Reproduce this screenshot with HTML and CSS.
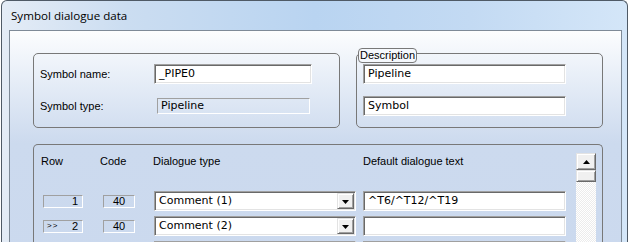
FILE: index.html
```html
<!DOCTYPE html>
<html>
<head>
<meta charset="utf-8">
<link rel="stylesheet" href="styles.css">
</head>
<body>
<div class="window">
  <div class="titlebar"><span class="title">Symbol dialogue data</span></div>
  <div class="frame-body">
    <div class="client">
      <div class="top-groups">
        <div class="group g-symbol">
          <div class="field-row">
            <span class="label">Symbol name:</span>
            <div class="edit w-name">_PIPE0</div>
          </div>
          <div class="field-row row-type">
            <span class="label">Symbol type:</span>
            <div class="static w-type">Pipeline</div>
          </div>
        </div>
        <div class="group g-desc">
          <span class="legend">Description</span>
          <div class="edit w-desc">Pipeline</div>
          <div class="edit w-desc second">Symbol</div>
        </div>
      </div>
      <div class="group g-table">
        <div class="table">
          <div class="th">Row</div>
          <div class="th">Code</div>
          <div class="th">Dialogue type</div>
          <div class="th">Default dialogue text</div>

          <div class="cell"><div class="rowbox"><span class="mark"></span><span>1</span></div></div>
          <div class="cell"><div class="codebox">40</div></div>
          <div class="cell"><div class="edit combo"><span class="combo-text">Comment (1)</span><span class="dd-btn"><svg width="7" height="4" viewBox="0 0 7 4"><path d="M0 0H7L3.5 4Z" fill="#000"/></svg></span></div></div>
          <div class="cell"><div class="edit w-text">^T6/^T12/^T19</div></div>

          <div class="cell"><div class="rowbox"><span class="mark">&gt;&gt;</span><span>2</span></div></div>
          <div class="cell"><div class="codebox">40</div></div>
          <div class="cell"><div class="edit combo"><span class="combo-text">Comment (2)</span><span class="dd-btn"><svg width="7" height="4" viewBox="0 0 7 4"><path d="M0 0H7L3.5 4Z" fill="#000"/></svg></span></div></div>
          <div class="cell"><div class="edit w-text"></div></div>

          <div class="cell"><div class="rowbox"><span class="mark"></span><span>3</span></div></div>
          <div class="cell"><div class="codebox">1</div></div>
          <div class="cell"><div class="edit combo"><span class="combo-text"></span><span class="dd-btn"><svg width="7" height="4" viewBox="0 0 7 4"><path d="M0 0H7L3.5 4Z" fill="#000"/></svg></span></div></div>
          <div class="cell"><div class="edit w-text"></div></div>
        </div>
        <div class="scrollbar">
          <div class="sb-btn"><svg width="7" height="4" viewBox="0 0 7 4"><path d="M3.5 0L7 4H0Z" fill="#000"/></svg></div>
          <div class="sb-thumb"></div>
          <div class="sb-track"></div>
        </div>
      </div>
    </div>
  </div>
</div>
</body>
</html>
```
FILE: styles.css
```css
* { box-sizing: border-box; }
html, body { margin: 0; padding: 0; }
body {
  width: 630px;
  height: 242px;
  overflow: hidden;
  background: #ffffff;
  font-family: "Liberation Sans", Arial, sans-serif;
  font-size: 11px;
  color: #000;
}
.window {
  margin-left: 1px;
  width: 627px;
  height: 270px;
  border: 1px solid #4f5a66;
  border-bottom: none;
  border-radius: 6px 6px 0 0;
  background: linear-gradient(to right, #e4ecf6 0%, #cbddf1 20%, #b9d4f1 50%, #c3daf3 75%, #d4e6f8 100%);
  overflow: hidden;
}
.titlebar {
  height: 29px;
  display: flex;
  align-items: center;
  padding-left: 9px;
}
.title {
  font-family: "Open Sans", "Noto Sans", sans-serif;
  font-size: 11.6px;
  color: #000;
  line-height: 14px;
}
.frame-body {
  padding: 0 5px 0 7px;
}
.client {
  border: 1px solid #7e8a97;
  border-bottom: none;
  height: 240px;
  background: linear-gradient(to bottom, #fcfdfe 0px, #e6edf7 50px, #ccdaee 112px, #cbd9ee 240px);
  padding: 22px 0 0 23px;
}
.top-groups {
  display: flex;
  gap: 16px;
}
.group {
  border: 1px solid #787878;
  border-radius: 5px;
  position: relative;
}
.g-symbol {
  width: 307px;
  height: 75px;
  padding: 10px 0 0 6px;
}
.field-row {
  display: flex;
  align-items: center;
  height: 20px;
}
.row-type {
  margin-top: 12px;
  align-items: flex-start;
}
.row-type .label { margin-top: 4px; }
.label {
  width: 114px;
  flex: none;
}
.edit {
  height: 20px;
  border: 1px solid;
  border-color: #a0a0a0 #ffffff #ffffff #a0a0a0;
  box-shadow: inset 1px 1px 0 #696969, inset -1px -1px 0 #e3e3e3;
  background: #ffffff;
  font-family: "DejaVu Sans", Verdana, sans-serif;
  font-size: 11px;
  line-height: 18px;
  padding-left: 4px;
  white-space: nowrap;
  overflow: hidden;
}
.w-name { width: 158px; }
.static {
  border: 1px solid;
  border-color: #a0a0a0 #ffffff #ffffff #a0a0a0;
  font-family: "DejaVu Sans", Verdana, sans-serif;
  font-size: 11px;
  line-height: 14px;
  height: 16px;
  padding-left: 3px;
}
.w-type {
  width: 153px;
  margin-left: 3px;
  margin-top: 2px;
}
.g-desc {
  width: 247px;
  height: 75px;
  padding: 10px 0 0 6px;
}
.legend {
  position: absolute;
  top: -6px;
  left: 1px;
  height: 15px;
  border: 1px solid #787878;
  border-radius: 4px;
  background: #f5f8fc;
  padding: 0 1px 0 1px;
  line-height: 13px;
}
.w-desc { width: 203px; }
.w-desc.second { margin-top: 12px; }

.g-table {
  width: 570px;
  height: 140px;
  margin-top: 16px;
  display: flex;
  align-items: flex-start;
  padding: 8px 6px 0 7px;
  border-bottom: none;
  border-radius: 5px 5px 0 0;
}
.table {
  display: grid;
  grid-template-columns: 59px 53px 210px 203px;
  grid-template-rows: 33px 20px 20px 20px;
  row-gap: 5px;
}
.table .th:nth-child(-n+4) { margin-bottom: -5px; }
.th {
  line-height: 16px;
  white-space: nowrap;
}
.cell {
  display: flex;
  align-items: center;
  height: 20px;
}
.rowbox {
  margin-left: 2px;
  width: 40px;
  height: 13px;
  border: 1px solid;
  border-color: #a0a0a0 #ffffff #ffffff #a0a0a0;
  display: flex;
  justify-content: space-between;
  align-items: center;
  padding: 0 4px 0 3px;
  line-height: 11px;
}
.mark {
  font-size: 8px;
  letter-spacing: 1px;
  line-height: 8px;
}
.codebox {
  margin-left: 3px;
  width: 32px;
  height: 13px;
  border: 1px solid;
  border-color: #a0a0a0 #ffffff #ffffff #a0a0a0;
  text-align: center;
  line-height: 11px;
  padding-left: 0;
}
.combo {
  margin-left: 1px;
  width: 202px;
  display: flex;
  align-items: center;
  padding-right: 1px;
}
.combo-text { flex: 1; }
.dd-btn {
  width: 17px;
  height: 16px;
  background: #f0f0f0;
  border: 1px solid;
  border-color: #e3e3e3 #696969 #696969 #e3e3e3;
  box-shadow: inset 1px 1px 0 #ffffff, inset -1px -1px 0 #a0a0a0;
  display: flex;
  align-items: center;
  justify-content: center;
}
.dd-btn svg { display: block; margin-top: 1px; }
.w-text { width: 203px; }

.scrollbar {
  margin-left: 10px;
  width: 20px;
  display: flex;
  flex-direction: column;
  height: 100px;
}
.sb-btn, .sb-thumb {
  background: #f0f0f0;
  border: 1px solid;
  border-color: #e3e3e3 #696969 #696969 #e3e3e3;
  box-shadow: inset 1px 1px 0 #ffffff, inset -1px -1px 0 #a0a0a0;
}
.sb-btn {
  height: 17px;
  display: flex;
  align-items: center;
  justify-content: center;
}
.sb-btn svg { display: block; }
.sb-thumb { height: 12px; }
.sb-track {
  flex: 1;
  background: repeating-conic-gradient(#ececec 0 25%, #ffffff 0 50%) 0 0 / 2px 2px;
}
```
